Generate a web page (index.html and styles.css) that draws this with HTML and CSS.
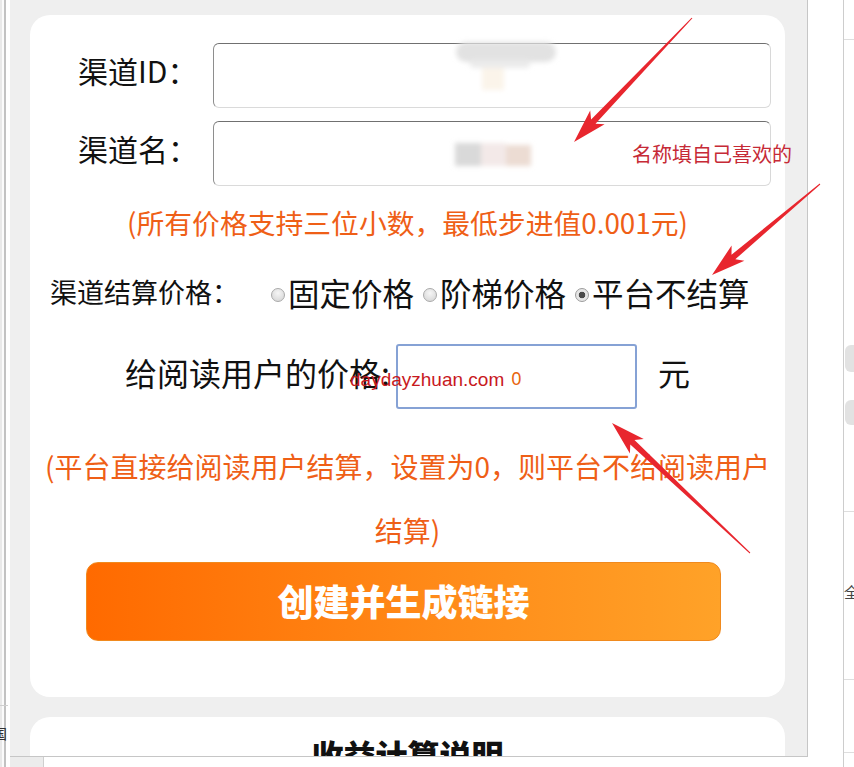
FILE: index.html
```html
<!DOCTYPE html>
<html lang="zh-CN">
<head>
<meta charset="utf-8">
<title>创建渠道</title>
<link rel="stylesheet" href="styles.css">
</head>
<body>
<div class="screen">
  <div class="left-strip">
    <div class="ls-line"></div>
    <div class="ls-char">国</div>
  </div>

  <div class="phone-col">
    <div class="phone">
      <div class="card form-card">
        <div class="field-row">
          <label class="field-label">渠道ID：</label>
          <input class="text-input" type="text">
        </div>
        <div class="field-row">
          <label class="field-label">渠道名：</label>
          <input class="text-input" type="text">
        </div>

        <p class="note note-1">(所有价格支持三位小数，最低步进值0.001元)</p>

        <div class="radio-row">
          <span class="radio-title">渠道结算价格：</span>
          <span class="radio-opt"><span class="radio-dot"></span>固定价格</span>
          <span class="radio-opt"><span class="radio-dot"></span>阶梯价格</span>
          <span class="radio-opt"><span class="radio-dot checked"></span>平台不结算</span>
        </div>

        <div class="price-row">
          <span class="price-label">给阅读用户的价格:</span>
          <input class="price-input" type="text" value="0">
          <span class="unit">元</span>
        </div>

        <p class="note note-2">(平台直接给阅读用户结算，设置为0，则平台不给阅读用户结算)</p>

        <button class="create-btn" type="button">创建并生成链接</button>
      </div>

      <div class="card info-card">
        <h2 class="info-title">收益计算说明</h2>
      </div>
    </div>
    <div class="phone-bottom"></div>
  </div>

  <div class="right-strip">
    <div class="rs-gap"></div>
    <div class="rs-panel">
      <div class="rs-line rs-l1"></div>
      <div class="rs-pill rs-p1"></div>
      <div class="rs-pill rs-p2"></div>
      <div class="rs-line rs-l2"></div>
      <div class="rs-char">全</div>
      <div class="rs-line rs-l3"></div>
      <div class="rs-line rs-l4"></div>
    </div>
  </div>

  <svg class="annotations" width="854" height="767" viewBox="0 0 854 767">
    <defs>
      <filter id="blur" x="-20%" y="-50%" width="140%" height="200%">
        <feGaussianBlur stdDeviation="2.5"/>
      </filter>
    </defs>
    <g filter="url(#blur)">
      <rect x="456" y="42" width="100" height="20" rx="10" fill="#e2e2e2"/>
      <rect x="470" y="60" width="60" height="8" rx="4" fill="#ebebeb"/>
      <rect x="482" y="68" width="22" height="22" fill="#fbf4ea"/>
      <rect x="455" y="143" width="26" height="23" fill="#d9d9d9"/>
      <rect x="481" y="143" width="25" height="23" fill="#f3e9e8"/>
      <rect x="506" y="145" width="25" height="21" fill="#ecdcd3"/>
    </g>
    <polygon class="arrow" points="692.4,18.3 595.5,123.8 604.6,124.3 574,142 590.2,110.5 591.1,119.6 691.6,17.7"/>
    <polygon class="arrow" points="820.3,184.4 735.3,259.3 744.4,260.8 712,275 731.6,245.5 731.5,254.7 819.7,183.6"/>
    <polygon class="arrow" points="750.3,552.6 634.5,440.0 643.7,439.0 612,423 629.9,453.6 630.3,444.4 749.7,553.4"/>
  </svg>
  <div class="anno-text">名称填自己喜欢的</div>
  <div class="watermark">daydayzhuan.com</div>
</div>
</body>
</html>
```

FILE: styles.css
```css
html, body {
  margin: 0;
  padding: 0;
  background: #ffffff;
}

body {
  font-family: "Noto Sans CJK SC", "Noto Sans", sans-serif;
  color: #111111;
}

.screen {
  position: relative;
  display: flex;
  width: 854px;
  height: 767px;
  overflow: hidden;
}

/* left edge of the underlying window */
.left-strip {
  flex: none;
  width: 10px;
  display: flex;
  flex-direction: column;
  overflow: hidden;
  background: linear-gradient(90deg, #e9e9e9 0 2px, #fbfbfb 2px 4px, #c2c2c2 4px 6px, #ffffff 6px 10px);
}

.ls-line {
  margin-top: 705px;
  border-top: 1px solid #cfcfcf;
  width: 8px;
}

.ls-char {
  margin-top: 19px;
  margin-left: -7px;
  font-size: 14px;
  line-height: 16px;
  color: #333;
}

/* phone panel */
.phone-col {
  flex: none;
  width: 798px;
  display: flex;
  flex-direction: column;
}

.phone {
  height: 757px;
  box-sizing: border-box;
  background: #efefef;
  border-right: 1px solid #c6c6c6;
  border-bottom: 1px solid #c6c6c6;
  padding: 15px 22px 0 20px;
  overflow: hidden;
}

.phone-bottom {
  flex: 1;
  background: linear-gradient(90deg, #ececec 0 33px, #cfcfcf 33px 34px, #ffffff 34px);
}

.card {
  background: #ffffff;
  border-radius: 20px;
}

.form-card {
  padding: 28px 0 56px 0;
}

.field-row {
  display: flex;
  align-items: center;
  height: 65px;
  padding-right: 14px;
}

.field-row + .field-row {
  margin-top: 13px;
}

.field-label {
  flex: none;
  width: 135px;
  padding-left: 48px;
  margin-bottom: 12px;
  font-size: 30px;
  line-height: 40px;
  color: #111;
  white-space: nowrap;
}

.text-input {
  flex: 1;
  min-width: 0;
  height: 65px;
  box-sizing: border-box;
  border: 1px solid;
  border-color: #707070 #d8d8d8 #dadada #8e8e8e;
  border-radius: 6px;
  background: #fff;
  outline: none;
}

.note {
  margin: 0;
  color: #ef5f17;
  text-align: center;
}

.note-1 {
  margin-top: 16px;
  font-size: 27.8px;
  line-height: 40px;
}

.radio-row {
  margin-top: 28px;
  height: 44px;
  display: flex;
  align-items: center;
  padding-left: 20px;
  white-space: nowrap;
}

.radio-title {
  flex: none;
  width: 221px;
  font-size: 27px;
  line-height: 40px;
}

.radio-opt {
  display: flex;
  align-items: center;
  font-size: 31.5px;
  line-height: 44px;
}

.radio-opt + .radio-opt {
  margin-left: 9px;
}

.radio-dot {
  flex: none;
  width: 14px;
  height: 14px;
  box-sizing: border-box;
  margin: 5px 3px 0 0;
  border-radius: 50%;
  border: 1px solid #aaaaaa;
  background: radial-gradient(circle at 50% 35%, #f6f6f6, #d2d2d2);
}

.radio-dot.checked {
  border-color: #9c9c9c;
  background: radial-gradient(circle, #4b4b4b 0 3px, #e6e6e6 3.6px);
}

.price-row {
  margin-top: 30px;
  height: 65px;
  display: flex;
  align-items: center;
  padding-left: 95px;
  white-space: nowrap;
}

.price-label {
  flex: none;
  width: 271px;
  margin-bottom: 10px;
  font-size: 32px;
  line-height: 44px;
}

.price-input {
  flex: none;
  width: 241px;
  height: 65px;
  box-sizing: border-box;
  border: 2px solid #86a2d5;
  border-radius: 3px;
  background: #fff;
  font-family: "Noto Sans", sans-serif;
  font-size: 18px;
  color: #e8650f;
  text-align: center;
  outline: none;
  padding: 2px 0 0;
}

.unit {
  margin-left: 21px;
  margin-bottom: 10px;
  font-size: 32px;
  line-height: 44px;
}

.note-2 {
  margin-top: 25px;
  padding: 0 10px;
  font-size: 28px;
  line-height: 64px;
}

.create-btn {
  display: block;
  margin: 0 0 0 56px;
  width: 635px;
  height: 79px;
  box-sizing: border-box;
  border: 1px solid #f08a1e;
  border-radius: 12px;
  background: linear-gradient(90deg, #ff6a00 0%, #ff8a18 55%, #ffa228 100%);
  color: #ffffff;
  font-family: "Noto Sans CJK SC", sans-serif;
  font-size: 36px;
  font-weight: 900;
  padding: 0 0 4px;
}

.info-card {
  margin-top: 20px;
  height: 200px;
  padding-top: 16px;
}

.info-title {
  margin: 0;
  text-align: center;
  font-size: 32px;
  font-weight: 900;
  line-height: 42px;
  color: #111;
}

/* right edge of the underlying window */
.right-strip {
  flex: none;
  width: 46px;
  display: flex;
  background: #ffffff;
}

.rs-gap {
  flex: none;
  width: 35px;
}

.rs-panel {
  flex: 1;
  border-left: 1px solid #cdcdcd;
  display: flex;
  flex-direction: column;
  overflow: hidden;
}

.rs-line {
  border-top: 1px solid #dedede;
}

.rs-l1 { margin-top: 39px; }
.rs-l2 { margin-top: 86px; }
.rs-l3 { margin-top: 77px; }
.rs-l4 { margin-top: 72px; }

.rs-pill {
  margin-left: 1px;
  background: #e2e2e2;
  border-radius: 6px 0 0 6px;
}

.rs-p1 { margin-top: 305px; height: 27px; }
.rs-p2 { margin-top: 28px; height: 25px; }

.rs-char {
  margin-top: 70px;
  font-size: 15px;
  line-height: 20px;
  color: #444;
  white-space: nowrap;
}

/* screenshot annotations */
.annotations {
  position: absolute;
  left: 0;
  top: 0;
  pointer-events: none;
}

.arrow {
  fill: #e8262e;
}

.anno-text {
  position: absolute;
  left: 632px;
  top: 144px;
  font-size: 20px;
  line-height: 20px;
  color: #c62a36;
  white-space: nowrap;
}

.watermark {
  position: absolute;
  left: 350px;
  top: 369px;
  font-family: "Liberation Sans", Arial, sans-serif;
  font-size: 19px;
  line-height: 22px;
  color: #c8191e;
  white-space: nowrap;
}
```
